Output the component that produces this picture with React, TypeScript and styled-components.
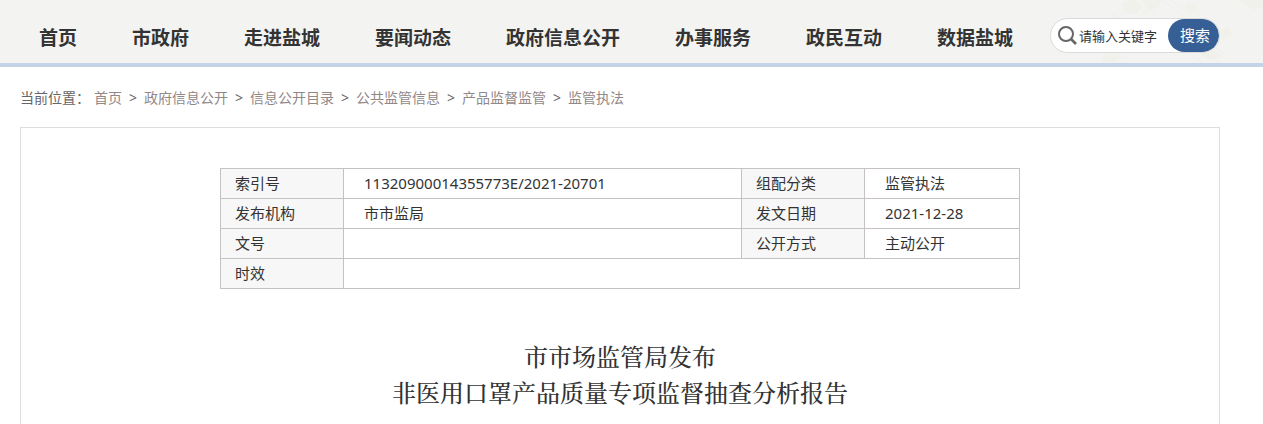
import React from "react";
import styled, { createGlobalStyle } from "styled-components";

const GlobalStyle = createGlobalStyle`
  *, *::before, *::after { box-sizing: border-box; }
  body {
    margin: 0;
    background: #fff;
    color: #333;
    font-family: "Noto Sans", "Noto Sans CJK SC", sans-serif;
  }
  a { color: inherit; text-decoration: none; }
`;

const Header = styled.header`
  position: relative;
  display: flex;
  align-items: flex-start;
  padding: 18px 43px 10px 39px;
  background: #f3f3f1;
  border-bottom: 4px solid #c5d3e6;
`;

const Texture = styled.svg`
  position: absolute;
  top: 0;
  right: 0;
  width: 163px;
  height: 63px;
`;

const Nav = styled.nav`
  display: flex;
  gap: 55px;
  padding-top: 6px;
`;

const NavLink = styled.a`
  font-size: 19px;
  line-height: 28px;
  font-weight: 700;
  white-space: nowrap;
`;

const Search = styled.form`
  position: relative;
  display: flex;
  align-items: center;
  width: 170px;
  height: 35px;
  margin-left: auto;
  padding-left: 7px;
  border: 1px solid #dadada;
  border-radius: 18px;
  background: #fff;
  overflow: hidden;
`;

const SearchIcon = styled.svg`
  flex: none;
  width: 19px;
  height: 19px;
`;

const SearchInput = styled.input`
  flex: 1;
  min-width: 0;
  height: 33px;
  padding: 0 0 0 2px;
  border: 0;
  outline: 0;
  background: transparent;
  color: #333;
  font: 13px "Noto Sans CJK SC", sans-serif;
  &::placeholder { color: #333; opacity: 1; }
`;

const SearchButton = styled.button`
  width: 51px;
  height: 33px;
  padding: 0 0 2px 3px;
  border: 0;
  border-radius: 17px;
  background: #365f95;
  color: #fff;
  font: 15px "Noto Sans CJK SC", sans-serif;
`;

const Main = styled.main`
  padding: 20px 43px 0 20px;
`;

const Crumbs = styled.nav`
  display: flex;
  gap: 7px;
  font-size: 14px;
  line-height: 22px;
  color: #666;
  white-space: nowrap;
`;

const CrumbLabel = styled.span`
  width: 67px;
  color: #666;
`;

const CrumbLink = styled.a`
  color: #918888;
`;

const CrumbArrow = styled.span`
  width: 8px;
`;

const Card = styled.article`
  margin-top: 18px;
  padding: 40px 20px 20px;
  border: 1px solid #ddd;
`;

const InfoTable = styled.table`
  width: 100%;
  max-width: 800px;
  margin: 0 auto;
  border-collapse: collapse;
  table-layout: fixed;
  font-size: 15px;
  line-height: 22px;
`;

const Label = styled.th`
  height: 30px;
  padding: 0 0 2px 14px;
  border: 1px solid #c6c2c2;
  background: #f7f7f7;
  font-weight: 400;
  text-align: left;
`;

const Value = styled.td`
  height: 30px;
  padding: 0 0 2px 20px;
  border: 1px solid #c6c2c2;
`;

const Title = styled.h1`
  margin: 49px 0 0;
  font-family: "Noto Serif CJK SC", "Source Han Serif SC", "SimSun", serif;
  font-size: 24px;
  line-height: 36px;
  font-weight: 500;
  text-align: center;
`;

const LabelColumn = styled.col`
  width: 123px;
`;

const LastColumn = styled.col`
  width: 155px;
`;

const navItems = ["首页", "市政府", "走进盐城", "要闻动态", "政府信息公开", "办事服务", "政民互动", "数据盐城"];
const crumbs = ["首页", "政府信息公开", "信息公开目录", "公共监管信息", "产品监督监管", "监管执法"];
const rows = [
  ["索引号", "11320900014355773E/2021-20701", "组配分类", "监管执法"],
  ["发布机构", "市市监局", "发文日期", "2021-12-28"],
  ["文号", "", "公开方式", "主动公开"],
];

export default function App() {
  return (
    <>
      <GlobalStyle />
      <Header>
        <Texture viewBox="0 0 163 63" aria-hidden="true" fill="none" stroke="#efefed" strokeWidth="1">
          <path d="M8 12l22 12M22 2l14 12M30 0l20 16M44 4l12 10M62 0l24 18M70 0l22 15M88 2l12 10M84 48l18 14M92 46l26 16M104 38l20 16M112 30l16 12M140 0l12 8M150 0l13 9" />
          <g stroke="none" fill="#f1f1ec">
            <path d="M22 2l12-2 8 6-6 8-12-2zM42 0h20l-4 8-10 2zM2 55l10-4 10 5-6 6H4zM100 42l12 4 10 12-14 2-10-8z" />
            <path d="M84 5l10-2 4 6-8 4zM118 30l10-2 6 6-10 4zM138 0h25v6l-8 4-8-6z" />
          </g>
        </Texture>
        <Nav aria-label="主导航">
          {navItems.map((item) => (
            <NavLink href="#" key={item}>{item}</NavLink>
          ))}
        </Nav>
        <Search onSubmit={(e) => e.preventDefault()}>
          <SearchIcon viewBox="0 0 19 19" fill="none" stroke="#666" aria-hidden="true">
            <circle cx="8" cy="8" r="7" strokeWidth="2" />
            <path d="M13 13l5 5" strokeWidth="2.6" />
          </SearchIcon>
          <SearchInput type="text" aria-label="搜索关键字" placeholder="请输入关键字" />
          <SearchButton type="submit">搜索</SearchButton>
        </Search>
      </Header>
      <Main>
        <Crumbs aria-label="当前位置">
          <CrumbLabel>当前位置：</CrumbLabel>
          {crumbs.map((item, i) => (
            <React.Fragment key={item}>
              {i > 0 && <CrumbArrow>&gt;</CrumbArrow>}
              <CrumbLink href="#">{item}</CrumbLink>
            </React.Fragment>
          ))}
        </Crumbs>
        <Card>
          <InfoTable>
            <colgroup>
              <LabelColumn />
              <col />
              <LabelColumn />
              <LastColumn />
            </colgroup>
            <tbody>
              {rows.map(([a, b, c, d]) => (
                <tr key={a}>
                  <Label scope="row">{a}</Label>
                  <Value>{b}</Value>
                  <Label scope="row">{c}</Label>
                  <Value>{d}</Value>
                </tr>
              ))}
              <tr>
                <Label scope="row">时效</Label>
                <Value colSpan={3} />
              </tr>
            </tbody>
          </InfoTable>
          <Title>
            市市场监管局发布
            <br />
            非医用口罩产品质量专项监督抽查分析报告
          </Title>
        </Card>
      </Main>
    </>
  );
}
